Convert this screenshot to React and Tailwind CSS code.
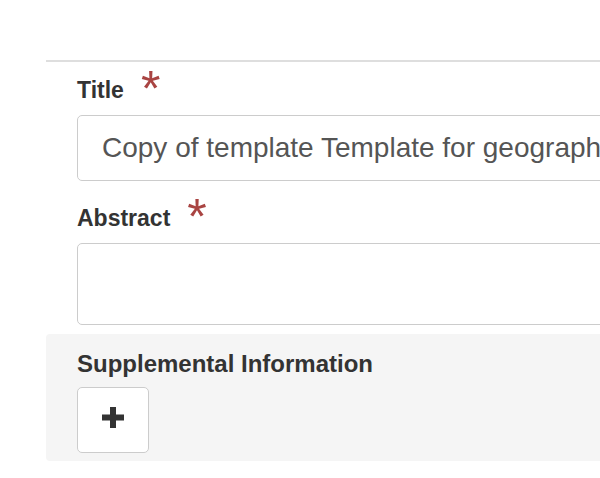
import React from 'react';

const Required = () => (
  <span className="relative top-[8px] ml-[17px] text-[50px] leading-[0px] font-normal text-[#a94442]">*</span>
);

const App = () => {
  return (
    <div className="w-[600px] h-[478px] overflow-hidden bg-white font-['Liberation_Sans',Arial,sans-serif] text-[#333]">
      <div className="ml-[46px] w-[720px] pt-[60px]">
        {/* Title / Abstract */}
        <div className="border-t-2 border-[#dedede] pl-[31px]">
          <div className="pt-[17px]">
            <label className="block h-[23px] text-[23px] leading-[23px] font-bold whitespace-nowrap">
              Title
              <Required />
            </label>
            <input
              type="text"
              readOnly
              value="Copy of template Template for geographic data"
              className="mt-[13px] block w-full h-[66px] px-[24px] border border-[#cccccc] rounded-[5px] text-[28px] text-[#555] bg-white outline-none"
            />
          </div>

          <div className="pt-[26px]">
            <label className="block h-[23px] text-[23px] leading-[23px] font-bold whitespace-nowrap">
              Abstract
              <Required />
            </label>
            <textarea
              readOnly
              className="mt-[13px] block w-full h-[82px] px-[24px] border border-[#cccccc] rounded-[5px] text-[28px] text-[#555] bg-white outline-none resize-none"
            />
          </div>
        </div>

        {/* Supplemental Information */}
        <div className="mt-[9px] bg-[#f5f5f5] rounded-[4px] pl-[31px] pt-[18px] pb-[8px]">
          <div className="text-[24px] leading-[24px] font-bold">Supplemental Information</div>
          <button className="mt-[11px] flex items-center justify-center w-[72px] h-[66px] bg-white border border-[#cccccc] rounded-[5px]">
            <svg width="22" height="21" viewBox="0 0 22 21" className="-mt-[5px]">
              <rect x="8" y="0" width="6" height="21" fill="#333" />
              <rect x="0" y="7.5" width="22" height="6" fill="#333" />
            </svg>
          </button>
        </div>
      </div>
    </div>
  );
};

export default App;
